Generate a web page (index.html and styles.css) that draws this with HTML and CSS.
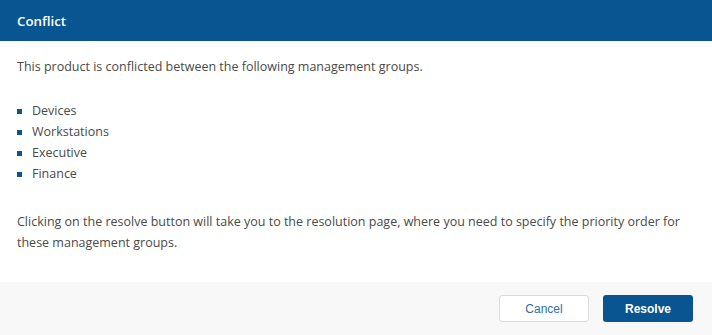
FILE: index.html
```html
<!DOCTYPE html>
<html>
<head>
    <title>Conflict</title>
    <link rel="stylesheet" href="styles.css">
</head>
<body>
    <div class="dialog">
        <div class="dialog-header">Conflict</div>
        <div class="dialog-body">
            <p>This product is conflicted between the following management groups.</p>
            <ul class="group-list">
                <li>Devices</li>
                <li>Workstations</li>
                <li>Executive</li>
                <li>Finance</li>
            </ul>
            <p>Clicking on the resolve button will take you to the resolution page, where you need to specify the priority order for these management groups.</p>
        </div>
        <div class="dialog-footer">
            <button type="button" class="button button-cancel">Cancel</button>
            <button type="button" class="button button-primary">Resolve</button>
        </div>
    </div>
</body>
</html>
```

FILE: styles.css
```css
body {
    font-family: "Open Sans", sans-serif;
    margin: 0;
    padding: 0;
    background-color: #fff;
}
.dialog {
    width: 712px;
    height: 335px;
    display: flex;
    flex-direction: column;
}
.dialog-header {
    height: 41px;
    padding: 0 17px;
    display: flex;
    align-items: center;
    font-size: 13.3px;
    font-weight: 600;
    color: #fff;
    background-color: #085591;
}
.dialog-body {
    flex: 1;
    padding: 15px 17px 0;
    font-size: 12.5px;
    line-height: 21px;
    color: #4a4a4a;
}
.dialog-body p {
    margin: 0;
}
.group-list {
    list-style: none;
    margin: 23px 0 27px;
    padding: 0;
}
.group-list li {
    display: flex;
    align-items: center;
}
.group-list li::before {
    content: "";
    width: 5px;
    height: 5px;
    margin: 1px 10px 0 0;
    background-color: #085591;
}
.dialog-footer {
    height: 53px;
    padding: 0 19px;
    display: flex;
    align-items: center;
    justify-content: flex-end;
    gap: 14px;
    background-color: #f8f8f8;
}
.button {
    width: 90px;
    height: 27px;
    font-family: "Liberation Sans", Arial, sans-serif;
    font-size: 12px;
    border-radius: 3px;
    cursor: pointer;
}
.button-cancel {
    color: #2d6fa6;
    background-color: #fff;
    border: 1px solid #dcdcdc;
}
.button-primary {
    font-weight: bold;
    color: #fff;
    background-color: #085591;
    border: none;
}
```
